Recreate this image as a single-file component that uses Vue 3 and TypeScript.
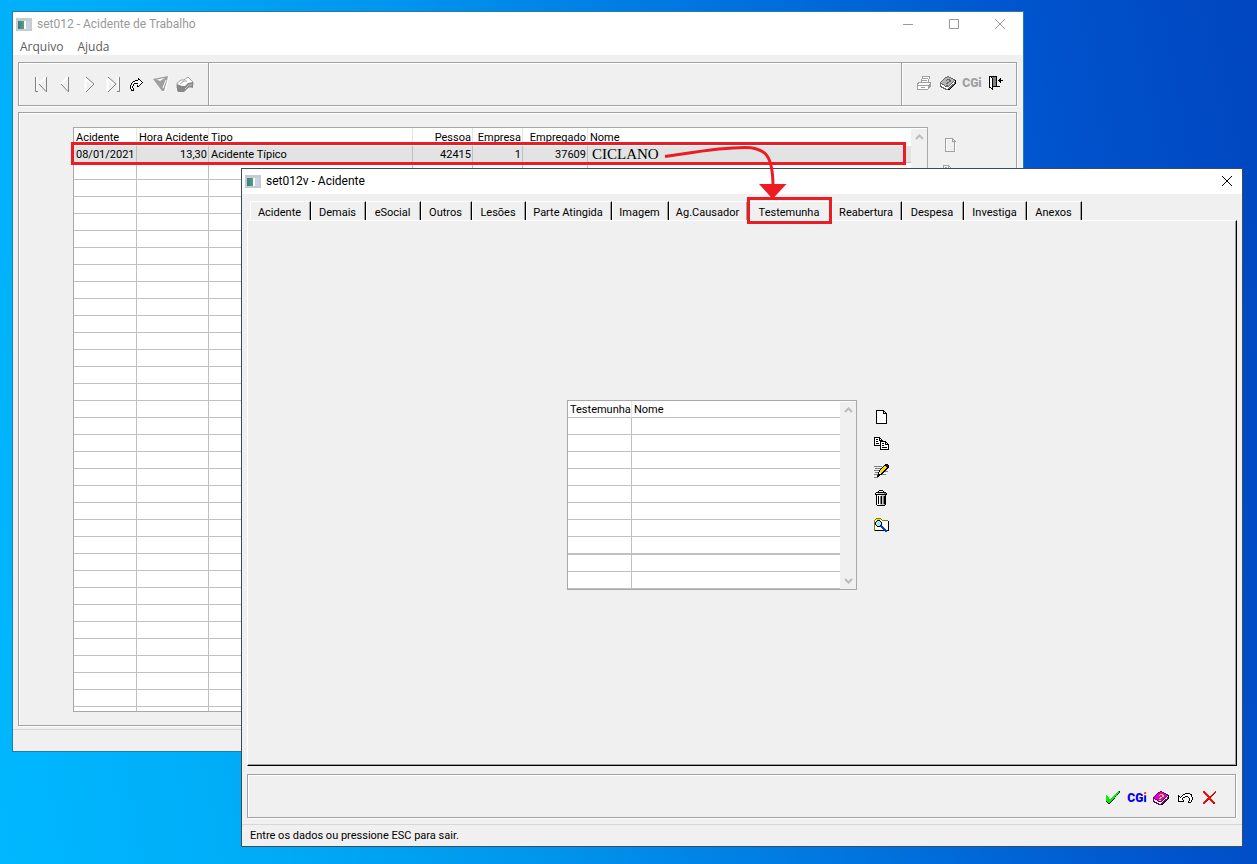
<script setup lang="ts">
import { h, ref } from 'vue'

const palette: Record<string, string> = {
  K: '#000000', W: '#ffffff', G: '#808080', L: '#a0a0a0', Y: '#f0e000', O: '#808000',
  P: '#500050', C: '#60e8f8', B: '#0040d8', S: '#c8c8c8', N: '#00f000', D: '#006000',
  R: '#f01010', Q: '#b00000', M: '#d800d8', V: '#700070', A: '#b4b4b4', F: '#686868'
}

const book = [
  '.......VV.......', '.....VVMMVV.....', '....VMMMMMMVV...', '...VMMMYYYMMMVV.', '..VMMMYMMYYMMMVK',
  '.VMMMMMMMYYMMVWK', 'VMMMMMMYYMMMVWVK', 'VVMMMMYYMMMVWWVK', 'VWVVMMMMMMVWVVK.', 'VWWWVMYYMVWVVK..',
  'VVWWWVVVVWVVK...', '.VVVWWWWWVVK....', '...VVVWWVVK.....', '.....VVVKK......'
]

const bitmaps: Record<string, string[]> = {
  book,
  bookGray: book.map(r => r.replace(/M/g, 'A').replace(/Y/g, 'F').replace(/V/g, 'F')),
  doc: [
    'KKKKKKKK...', 'KWWWWWWKK..', 'KWWWWWWKWK.', 'KWWWWWWKKKK',
    ...Array<string>(9).fill('KWWWWWWWWWK'), 'KKKKKKKKKKK'
  ],
  docOff: [
    'LLLLLLLL...', 'LWWWWWWLL..', 'LW.....LWL.', 'LW.....LLLL',
    ...Array<string>(9).fill('LW.......LW'), 'LLLLLLLLLLW'
  ],
  copy: [
    'KKKKKK.........', 'KWWWWKK........', 'KWKKWKWK.......', 'KWWWWKKKK......',
    'KWKKWWKKKKKK...', 'KWWWWWKWWWWKK..', 'KWKKKWKWKKWKWK.', 'KWWWWWKWWWWKKKK',
    'KKKKKKKWKKWWWWK', '......KWWWWWWWK', '......KWKKKKKWK', '......KWWWWWWWK', '......KKKKKKKKK'
  ],
  copyOff: [
    'LLLLLL.........', 'LWWWWLL........', 'LWLLWLWL.......', 'LWWWWLLLL......',
    'LWLLWWLLLLLL...', 'LWWWWWLWWWWLL..', 'LWLLLWLWLLWLWL.', 'LWWWWWLWWWWLLLL'
  ],
  edit: [
    '...........KKK.', '..........KKPPK', 'GGGGGGGG.KYYKPK', '........KYYYYKK', '.GGGGGGKYYYYKK.',
    '......KYYYYKK..', 'GGGGGKYYYYKK...', '.....KYYYKKGGG.', '.GGGKWYYKK.....', '....KWWKK......',
    'GGGGKKKKGGGG...', '...KKK.........', '...KK..........', 'GGGG...........'
  ],
  trash: [
    '....KKKK....', '...KWWWWK...', '.KKKKKKKKKK.', 'KWWSSSSSSGGK', 'KKKKKKKKKKKK', '.KWWWWSSSSK.',
    ...Array<string>(8).fill('.KWKWGKSGKK.'), '.KWWWSSSSGK.', '..KKKKKKKK..'
  ],
  search: [
    '..OOOOO........', '.OYYYYYO.......', 'OWWKKKWWOOOOOO.', 'OWKCWCKWWWWWWWK', 'OKCWCWCKWWWWWWK',
    'OKWCWCWKWWWWWWK', 'OKCWCWCKWWWWWWK', 'OWKCWCKBWWWWWWK', 'OWWKKKBBBWWWWWK', 'OWWWWWWBBBWWWWK',
    'OWWWWWWWBBBWWWK', 'OWWWWWWWWBBBWWK', 'OKKKKKKKKKBBBKK', '...........BB..'
  ],
  redo: [
    '........K.....', '........KK....', '.....KKKWWK...', '...KKWWWWWWK..', '..KWWWWWWWWWK.',
    '.KWWKKKKWWWK..', '.KWK....WWK...', 'KWWK...KWK....', 'KWK....KK.....', 'KWK...........',
    'KWWK..........', '.KWK..........', '.KKK..........'
  ],
  check: [
    '............NK', '...........NND', '..........NND.', '.........NNK..', 'N.......NNN...', 'NN.....NNK....',
    'NNN...NNN.....', 'NNN..NNNK.....', 'NNNNNNNK......', 'NNNNNNK.......', 'KNNNNK........', '.KNNK.........', '..KK..........'
  ],
  undo: [
    '.......KKKKK...', '.....KKWWWWWKK.', 'K...KWWWWWWWWK.', 'KK.KWWWKKKWWWK.', 'KWKWWKK...KWWWK',
    'KWWWK......KWWK', 'KWWWK......KWWK', 'KWWWWK.....KWK.', 'KKKKKK....KWWK.', '..........KKK..'
  ],
  cross: [
    'RR..........R', 'RRR........RR', '.RRR......RQ.', '..RRR....RQ..', '...RRR..RQ...', '....RRRRQ....',
    '.....RRQ.....', '....RRRR.....', '...RRQRRR....', '..RRQ..RRR...', '.RRQ....RRR..', 'RRR......RRQ.', 'RR........QR.'
  ],
  door: [
    'KKKKKKKK......', 'KWKGGGGK......', 'KWWKGGGK...K..', 'KWWKGGGK..KK..', 'KWWKGGGK.KKKKK', 'KWWKGGGK..KK..',
    'KWWKGGGK...K..', 'KWWKGGGK......', 'KWWKGGGK......', 'KWWKGGGK......', 'KWWKKKKKKKK...', 'KKWK..........', '..KK..........', '...K..........'
  ]
}

function PixelIcon(props: { name: string }) {
  const rows = bitmaps[props.name]
  const width = Math.max(...rows.map(r => r.length))
  const cells = rows.flatMap((row, y) =>
    [...row].flatMap((c, x) => (palette[c] ? [h('rect', { x, y, width: 1, height: 1, fill: palette[c] })] : []))
  )
  return h('svg', { width, height: rows.length, viewBox: `0 0 ${width} ${rows.length}`, 'shape-rendering': 'crispEdges', 'aria-hidden': 'true' }, cells)
}
PixelIcon.props = ['name']

const navs = [
  { label: 'Primeiro', dark: 'M6.5 5V19.5H9 M17.5 5V20 M10 12L17 19.5', light: 'M7.5 5V18 M17 5L10 12' },
  { label: 'Anterior', dark: 'M15.5 5V20 M8 12L15 19.5', light: 'M15 5L8 12' },
  { label: 'Próximo', dark: 'M9 5L17 12L9 20', light: 'M8.5 6V19 M9 7L15 12' },
  { label: 'Último', dark: 'M7 5L15 12L7 20 M18.5 5V19.5H16', light: 'M6.5 6V19 M7 7L13 12 M17.5 5V18' }
]

const tabs = ['Acidente', 'Demais', 'eSocial', 'Outros', 'Lesões', 'Parte Atingida', 'Imagem', 'Ag.Causador', 'Testemunha', 'Reabertura', 'Despesa', 'Investiga', 'Anexos']
const activeTab = ref('Testemunha')

const actions = [
  { icon: 'doc', label: 'Novo' },
  { icon: 'copy', label: 'Copiar' },
  { icon: 'edit', label: 'Editar' },
  { icon: 'trash', label: 'Excluir' },
  { icon: 'search', label: 'Consultar' }
]
</script>

<template>
  <main class="desktop">
    <section class="window main-window" aria-label="set012 - Acidente de Trabalho">
      <header class="titlebar">
        <span class="app-icon"></span>
        <span class="title">set012 - Acidente de Trabalho</span>
        <button class="caption" aria-label="Minimizar"><svg width="12" height="12"><path d="M1 6.5H11" /></svg></button>
        <button class="caption" aria-label="Maximizar"><svg width="12" height="12"><path d="M1.5 1.5H10.5V10.5H1.5Z" /></svg></button>
        <button class="caption" aria-label="Fechar"><svg width="12" height="12"><path d="M1 1L11 11M11 1L1 11" /></svg></button>
      </header>
      <nav class="menubar">
        <button>Arquivo</button>
        <button>Ajuda</button>
      </nav>

      <div class="toolbar etched">
        <div class="tools">
          <button v-for="n in navs" :key="n.label" class="tool" :aria-label="n.label">
            <svg width="24" height="24"><path :d="n.light" class="light" /><path :d="n.dark" class="dark" /></svg>
          </button>
          <button class="tool" aria-label="Repetir"><PixelIcon name="redo" /></button>
          <button class="tool" aria-label="Filtrar">
            <svg width="17" height="17">
              <path d="M2 4L16 1L13 16H10Z" fill="#fff" />
              <path d="M0 3L15 0L14 5L11 15H9Z" fill="#a0a0a0" />
              <path d="M4 3.500L12 2L7 5Z" fill="#fff" />
              <path d="M13 4L10 12" stroke="#fff" />
            </svg>
          </button>
          <button class="tool" aria-label="Limpar">
            <svg width="18" height="16">
              <path d="M1 7L5 4H8L12 1L17 6V9L8 14L1 12Z" fill="#fff" stroke="#a0a0a0" />
              <path d="M1 8L6 10H9L12 7L17 6V12L13 11L8 16H2L1 14Z" fill="#888" />
              <path d="M4 8L8 5H11" fill="none" stroke="#a0a0a0" />
              <path d="M9 13L13 9H16" fill="none" stroke="#c8c8c8" />
            </svg>
          </button>
        </div>
        <div class="tools tools-right">
          <button class="tool" aria-label="Imprimir">
            <svg width="16" height="16" shape-rendering="crispEdges">
              <path d="M5 7L7 1H14L12 7ZM1 9L4 7H14V12L12 14H1Z" fill="#fff" stroke="#a0a0a0" />
              <path d="M7 3H12M6 5H11M1 10H12V14M5 12H9M13 9V13" fill="none" stroke="#a0a0a0" />
            </svg>
          </button>
          <button class="tool" aria-label="Ajuda"><PixelIcon name="bookGray" /></button>
          <button class="tool cgi muted">CGi</button>
          <button class="tool" aria-label="Sair"><PixelIcon name="door" /></button>
        </div>
      </div>

      <div class="browse etched">
        <div class="grid-box main-grid">
          <table class="grid">
            <colgroup><col class="c-date" /><col class="c-hour" /><col class="c-type" /><col class="c-person" /><col class="c-company" /><col class="c-employee" /><col /></colgroup>
            <thead>
              <tr><th>Acidente</th><th>Hora Acidente</th><th>Tipo</th><th class="num">Pessoa</th><th class="num">Empresa</th><th class="num">Empregado</th><th>Nome</th></tr>
            </thead>
            <tbody>
              <tr class="selected"><td>08/01/2021</td><td class="num">13,30</td><td>Acidente Típico</td><td class="num">42415</td><td class="num">1</td><td class="num">37609</td><td class="person">CICLANO</td></tr>
              <tr v-for="r in 33" :key="r"><td v-for="c in 7" :key="c"></td></tr>
            </tbody>
          </table>
          <div class="scroll"><svg width="9" height="6"><path d="M1 5L4.500 1.500L8 5" /></svg></div>
        </div>
        <div class="side-tools">
          <button aria-label="Novo acidente" disabled><PixelIcon name="docOff" /></button>
          <button aria-label="Copiar acidente" disabled><PixelIcon name="copyOff" /></button>
        </div>
      </div>
      <footer class="status"></footer>
    </section>

    <section class="window dialog" role="dialog" aria-label="set012v - Acidente">
      <header class="titlebar">
        <span class="app-icon"></span>
        <span class="title">set012v - Acidente</span>
        <button class="caption" aria-label="Fechar diálogo"><svg width="12" height="12"><path d="M1 1L11 11M11 1L1 11" /></svg></button>
      </header>
      <div class="tabs" role="tablist">
        <button v-for="t in tabs" :key="t" role="tab" :aria-selected="t === activeTab" :class="{ active: t === activeTab }" @click="activeTab = t">{{ t }}</button>
      </div>
      <div class="panel" role="tabpanel">
        <div class="grid-box witness-grid">
          <table class="grid">
            <colgroup><col class="c-witness" /><col /></colgroup>
            <thead><tr><th>Testemunha</th><th>Nome</th></tr></thead>
            <tbody><tr v-for="r in 10" :key="r"><td></td><td></td></tr></tbody>
          </table>
          <div class="scroll">
            <svg width="9" height="6"><path d="M1 5L4.500 1.500L8 5" /></svg>
            <svg width="9" height="6"><path d="M1 1L4.500 4.500L8 1" /></svg>
          </div>
        </div>
        <div class="actions">
          <button v-for="a in actions" :key="a.icon" :aria-label="a.label"><PixelIcon :name="a.icon" /></button>
        </div>
      </div>
      <div class="dialog-bar etched">
        <button class="tool" aria-label="Confirmar"><PixelIcon name="check" /></button>
        <button class="tool cgi">CG<span class="cgi-i">i</span></button>
        <button class="tool" aria-label="Ajuda do diálogo"><PixelIcon name="book" /></button>
        <button class="tool" aria-label="Desfazer"><PixelIcon name="undo" /></button>
        <button class="tool" aria-label="Cancelar"><PixelIcon name="cross" /></button>
      </div>
      <footer class="status">Entre os dados ou pressione ESC para sair.</footer>
    </section>

    <svg class="marks" width="920" height="240" aria-hidden="true">
      <path d="M72.500 143.500H904.500V163.500H72.500Z M748.500 198.500H830.500V222.500H748.500Z" />
      <path d="M665 156.500C690 153 718 147.500 745 147.500C766 147.500 773 156 773 187" />
      <path class="head" d="M759 184H786.500L772.500 199Z" />
    </svg>
  </main>
</template>

<style>
body { margin: 0; }
</style>

<style scoped>
* { box-sizing: border-box; }
button { margin: 0; padding: 0; border: 0; background: none; font: inherit; color: inherit; display: flex; align-items: center; justify-content: center; }
.desktop {
  position: relative;
  min-height: 100vh;
  overflow: hidden;
  font: 11px/16px Roboto, "Liberation Sans", sans-serif;
  color: #000;
  background: linear-gradient(80deg, #00b8ff 0%, #00aef8 16%, #0096ee 38%, #006edc 65%, #0052cc 85%, #0046c0 100%);
}
.window { position: absolute; display: flex; flex-direction: column; background: #f0f0f0; border: 1px solid #24506e; }
.main-window { left: 12px; top: 11px; right: 233px; bottom: 112px; border-color: #2a7aa8; }
.dialog { left: 241px; top: 168px; right: 14px; bottom: 17px; border-color: #3c4c5c; }
.titlebar { display: flex; align-items: center; height: 25px; flex: none; background: #fff; font: 12px/16px Roboto, sans-serif; padding: 0 0 1px 3px; }
.main-window .titlebar { color: #999; }
.title { flex: 1; padding-left: 5px; }
.app-icon { width: 16px; height: 13px; border: 2px solid #c4ccd2; border-top-width: 3px; background: linear-gradient(90deg, #3c7c8c 0, #58a078 6px, #fff 6px, #fff 8px, #c8d4e4 8px); }
.caption { width: 46px; height: 24px; }
.dialog .caption { width: 30px; }
.caption path { fill: none; stroke: currentColor; }
.menubar { display: flex; height: 18px; flex: none; background: #fff; gap: 14px; padding: 0 7px; color: #5c5c5c; font: 12px/16px "Open Sans", sans-serif; align-items: flex-start; }
.menubar button { height: 18px; padding-top: 2px; }
.etched { border: 1px solid #a0a0a0; box-shadow: inset 1px 1px 0 #fff, 1px 1px 0 #fff; }
.toolbar { display: flex; justify-content: space-between; height: 44px; flex: none; margin: 7px 6px 6px 5px; }
.tools { display: flex; align-items: center; padding: 0 11px 0 10px; border-right: 1px solid #a0a0a0; box-shadow: 1px 0 0 #fff; }
.tools-right { border-right: 0; border-left: 1px solid #a0a0a0; box-shadow: inset 1px 0 0 #fff; padding: 0 8px 0 10px; }
.tools-right .tool { padding-bottom: 2px; }
.tool { width: 24px; height: 24px; }
.light, .dark { fill: none; stroke: #fff; stroke-width: 2; }
.dark { stroke: #808080; stroke-width: 1; }
.cgi { font: 900 12px/16px Roboto, "Liberation Sans", sans-serif; color: #0000f0; }
.muted { color: #a0a0a0; }
.cgi-i { background: linear-gradient(#f02020 6px, #0000f0 6px); background-clip: text; color: transparent; }
.browse { display: flex; flex: 1; min-height: 0; margin: 0 6px 3px 5px; padding: 14px 0 13px 54px; }
.grid-box { display: flex; overflow: hidden; border: 1px solid #a8a8ac; background: #fff; }
.main-grid { flex: 1; }
.grid { flex: 1; align-self: flex-start; table-layout: fixed; border-spacing: 0; width: 0; }
.c-date { width: 63px; }
.c-witness { width: 64px; }
.c-hour { width: 72px; }
.c-type { width: 204px; }
.c-person { width: 60px; }
.c-company { width: 50px; }
.c-employee { width: 65px; }
th, td { height: 17px; padding: 2px 1px 0 2px; white-space: nowrap; line-height: 14px; border-right: 1px solid #c0c0c0; border-bottom: 1px solid #c0c0c0; text-align: left; font-weight: normal; overflow: hidden; }
th { border-right-color: #e4e4e4; }
th:last-child, td:last-child { border-right: 0; }
.main-grid th { height: 18px; border-bottom: 0; }
th.num, td.num { text-align: right; }
.selected td { background: #e3e3e3; }
.selected td.person { font: 15px/16px "Liberation Serif", serif; padding: 0 0 0 4px; }
.witness-grid tr:nth-child(8) td { height: 18px; border-bottom-width: 2px; }
.scroll { width: 16px; flex: none; margin-top: 1px; padding: 5px 0; background: #f0f0f0; display: flex; flex-direction: column; align-items: center; justify-content: space-between; }
.scroll path { fill: none; stroke: #bcbcbc; stroke-width: 2; }
.side-tools { width: 88px; display: flex; flex-direction: column; align-items: flex-start; gap: 13px; padding: 11px 15px; }
.side-tools button { width: 15px; }
.status { height: 22px; flex: none; border-top: 1px solid #d7d7d7; padding: 3px 8px 0; }
.tabs { display: grid; grid-template-columns: 61px 55px 55px 51px 54px 86px 57px 79px 84px 70px 62px 63px 55px; height: 19px; flex: none; margin: 7px 8px 0; }
.tabs button { border-top: 1px solid #fff; border-left: 1px solid #fff; border-right: 1px solid #000; box-shadow: inset -1px 0 0 #a0a0a0; border-radius: 2px 1px 0 0; padding: 3px 2px 0 0; }
.tabs button.active { padding: 2px 2px 0 0; }
.panel { flex: 1; min-height: 0; display: flex; align-items: center; justify-content: center; gap: 14px; margin: 0 5px 8px; padding: 3px 26px 0 0; border: 1px solid #fff; border-right-color: #000; border-bottom-color: #000; box-shadow: inset -1px -1px 0 #a0a0a0; }
.witness-grid { width: 290px; }
.actions { display: flex; flex-direction: column; align-items: center; padding-bottom: 48px; }
.actions button { width: 20px; height: 27px; }
.dialog-bar { display: flex; align-items: center; justify-content: flex-end; height: 44px; flex: none; margin: 0 6px 6px 5px; padding: 3px 14px 0; }
.marks { position: absolute; left: 0; top: 0; pointer-events: none; }
.marks path { fill: none; stroke: #ed1c24; stroke-width: 3; }
.marks .head { fill: #ed1c24; stroke: none; }
</style>
